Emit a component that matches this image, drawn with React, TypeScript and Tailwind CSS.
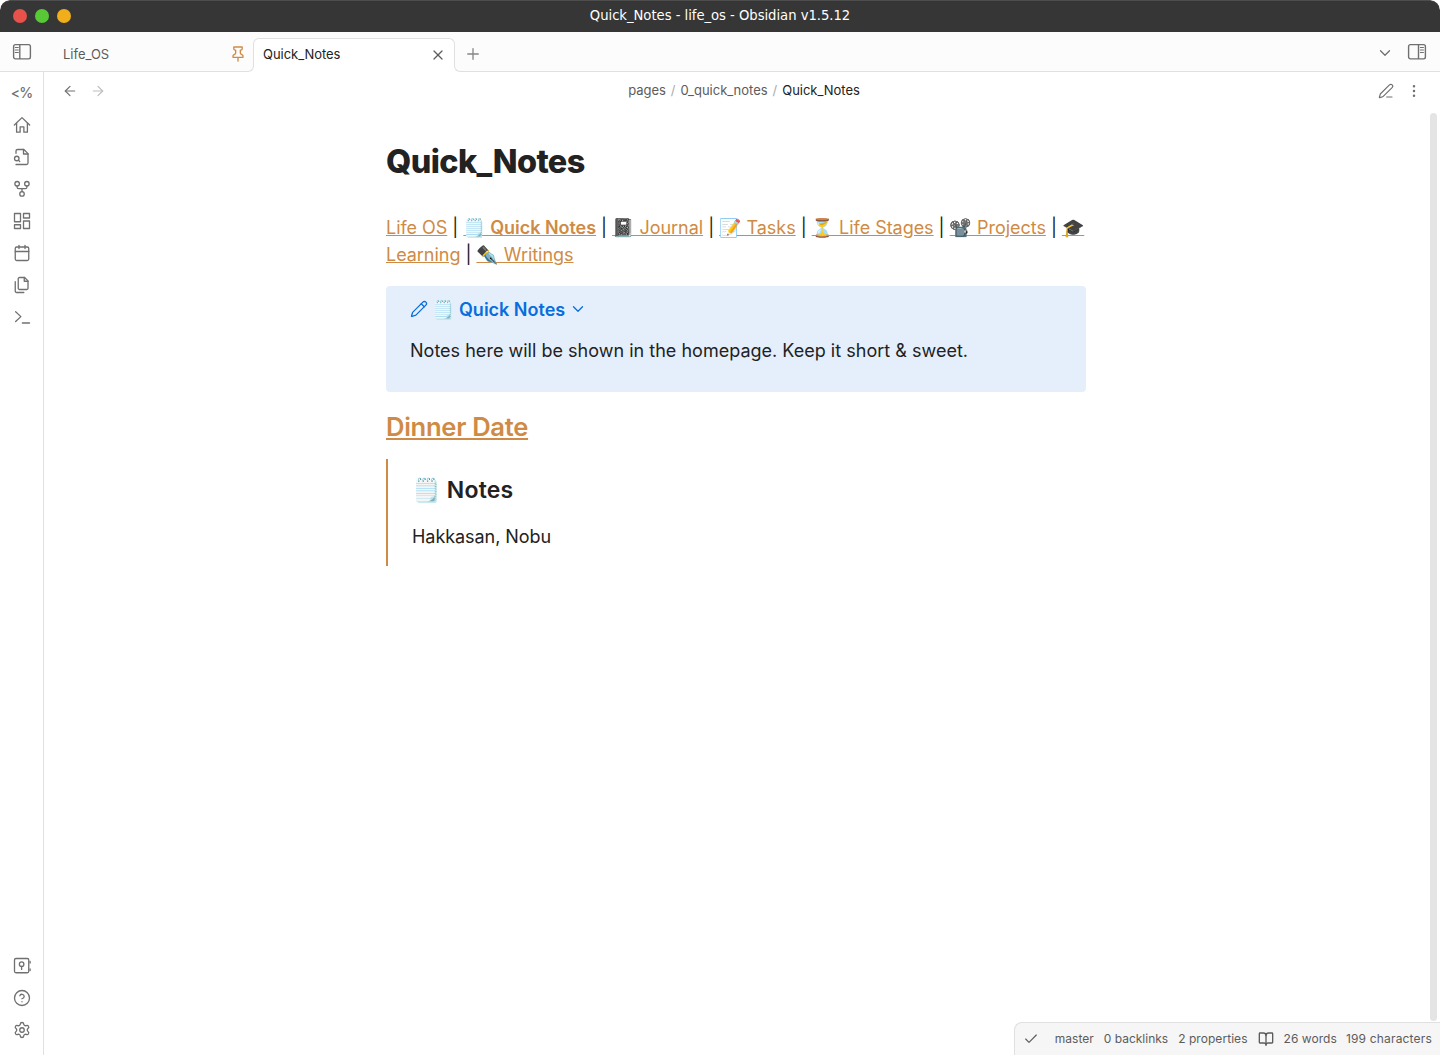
import { Fragment, type ReactNode } from "react";
import {
  ArrowLeft, ArrowRight, BookOpen, Calendar, Check, ChevronDown, CircleHelp, Edit3,
  MoreVertical, Pencil, Plus, Settings, X,
} from "lucide-react";

function Svg({ children, size = 18 }: { children: ReactNode; size?: number }) {
  return (
    <svg width={size} height={size} viewBox="0 0 24 24" fill="none" stroke="currentColor" strokeWidth="1.75" strokeLinecap="round" strokeLinejoin="round">
      {children}
    </svg>
  );
}

function SidebarIcon({ right = false }: { right?: boolean }) {
  return (
    <svg width="20" height="18" viewBox="0 0 20 18" fill="none" stroke="currentColor">
      <rect x="1.6" y="1.6" width="16.8" height="14.3" rx="1.8" strokeWidth="1.4" />
      <path d={right ? "M11.5 1.5v14.5" : "M7.8 1.5v14.5"} strokeWidth="1.4" />
      <path d={right ? "M13.4 4.5h3M13.4 7h3M13.4 9.5h3" : "M3.3 4.5h3M3.3 7h3M3.3 9.5h3"} strokeWidth="1.2" strokeLinecap="round" />
    </svg>
  );
}

const ribbonTop: ReactNode[] = [
  <span className="text-[14px] leading-none font-medium tracking-[-0.9px]">&lt;%</span>,
  <Svg><path d="M1.8 12 12 2.2 22.2 12" /><path d="M4.8 10v11.5h4.7v-7h5v7h4.7V10" /></Svg>,
  <Svg><path d="M4 22h14a2 2 0 0 0 2-2V7.5L14.5 2H6a2 2 0 0 0-2 2v3" /><path d="M14 2v6h6" /><circle cx="5" cy="14" r="3" /><path d="m9 18-1.5-1.5" /></Svg>,
  <Svg><circle cx="5.5" cy="5" r="3" /><circle cx="18.5" cy="5" r="3" /><circle cx="12" cy="18.5" r="3" /><path d="M5.5 8v1.5a2 2 0 0 0 2 2h9a2 2 0 0 0 2-2V8M12 11.5v4" /></Svg>,
  <Svg><path d="M2 2h8v11H2zM14 2h8v6h-8zM14 12h8v10h-8zM2 17h8v5H2z" /></Svg>,
  <Calendar size={18} strokeWidth={1.75} />,
  <Svg><path d="M15.5 2H8.6c-.4 0-.8.2-1.1.5-.3.3-.5.7-.5 1.1v12.8c0 .4.2.8.5 1.1.3.3.7.5 1.1.5h9.8c.4 0 .8-.2 1.1-.5.3-.3.5-.7.5-1.1V6.5L15.5 2z" /><path d="M3 7.6v12.8c0 .4.2.8.5 1.1.3.3.7.5 1.1.5h9.8M15 2v5h5" /></Svg>,
  <Svg><path d="m3.5 18 7-6.5-7-6.5M12.5 20H22" /></Svg>,
];

const links = [
  { text: "Life OS" },
  { text: "🗒️ Quick Notes", bold: true },
  { text: "📓 Journal" },
  { text: "📝 Tasks" },
  { text: "⏳ Life Stages" },
  { text: "📽️ Projects" },
  { text: "🎓 Learning" },
  { text: "✒️ Writings" },
];

export default function App() {
  return (
    <div className="bg-white">
      <div className="flex h-[1055px] w-[1440px] flex-col overflow-hidden rounded-t-[10px] bg-white font-['Inter','Noto_Color_Emoji',sans-serif] text-[#222222]">
        <header className="relative flex h-8 shrink-0 items-center justify-center rounded-t-[10px] border-t border-[#4d4d4d] bg-[#363636]">
          <div className="absolute top-2 left-[13px] flex gap-2">
            <i className="size-3.5 rounded-full bg-[#e9524a]" />
            <i className="size-3.5 rounded-full bg-[#59c837]" />
            <i className="size-3.5 rounded-full bg-[#f1ae1b]" />
          </div>
          <span className="pb-1 font-['DejaVu_Sans_Condensed','DejaVu_Sans',sans-serif] text-[14.67px] leading-5 tracking-[-0.03px] text-white [font-stretch:condensed]">Quick_Notes - life_os - Obsidian v1.5.12</span>
        </header>

        <div className="flex h-10 shrink-0 bg-[#fcfcfc] text-[13px] text-[#5c5c5c]">
          <div className="flex w-[53px] items-center border-b border-[#e0e0e0] pl-3 text-[#707070]"><SidebarIcon /></div>
          <div className="flex w-[200px] items-center justify-between border-b border-[#e0e0e0] pt-[5px] pr-[7px] pl-2.5">
            <span className="pt-0.5">Life_OS</span>
            <span className="text-[#cf8b45]">
              <svg width="16" height="16" viewBox="0 0 24 24" fill="none" stroke="currentColor" strokeWidth="2" strokeLinejoin="round" strokeLinecap="round">
                <path d="M12 17v5.5M4.5 17h15v-2a2 2 0 0 0-1.1-1.8l-1.8-.9A2 2 0 0 1 15.5 10.6V6.2h.8a2 2 0 0 0 2-2V1.5H5.7v2.7a2 2 0 0 0 2 2h.8v4.4a2 2 0 0 1-1.1 1.7l-1.8.9A2 2 0 0 0 4.5 15Z" />
              </svg>
            </span>
          </div>
          <div className="relative mt-1.5 flex w-[202px] items-center justify-between rounded-t-md border border-b-0 border-[#e0e0e0] bg-white pr-2 pb-[2px] pl-[9px] text-[#222222]">
            <span className="tracking-[-0.04px]">Quick_Notes</span>
            <X size={16} strokeWidth={1.9} className="text-[#5c5c5c]" />
            <i className="absolute bottom-0 -left-[6px] size-1.5 bg-white">
              <i className="block h-1.5 w-1.5 rounded-br-md border-r border-b border-[#e0e0e0] bg-[#fcfcfc]" />
            </i>
            <i className="absolute -right-[6px] bottom-0 size-1.5 bg-white">
              <i className="block h-1.5 w-1.5 rounded-bl-md border-b border-l border-[#e0e0e0] bg-[#fcfcfc]" />
            </i>
          </div>
          <div className="flex flex-1 items-center border-b border-[#e0e0e0] pt-1 pr-[13px] pl-[9px] text-[#707070]">
            <Plus size={18} strokeWidth={1.75} className="text-[#858585]" />
            <ChevronDown size={18} strokeWidth={1.75} className="-mt-0.5 mr-[13px] ml-auto" />
            <div className="-mt-1"><SidebarIcon right /></div>
          </div>
        </div>

        <div className="relative flex min-h-0 flex-1">
          <nav className="flex w-11 shrink-0 flex-col items-center border-r border-[#e0e0e0] pt-[5px] pb-[9px] text-[#707070]">
            {ribbonTop.map((icon, i) => (
              <div key={i} className="flex h-8 items-center">{icon}</div>
            ))}
            <div className="mt-auto flex h-8 items-center">
              <Svg><rect x="2" y="2" width="19" height="19" rx="2" /><circle cx="11.5" cy="9.5" r="3" /><path d="M11.5 12.5v4M22.8 6v2M22.8 16v2" /></Svg>
            </div>
            <div className="flex h-8 items-center"><CircleHelp size={18} strokeWidth={1.75} /></div>
            <div className="flex h-8 items-center"><Settings size={18} strokeWidth={1.75} /></div>
          </nav>

          <section className="flex min-w-0 flex-1 flex-col">
            <div className="flex h-[38px] shrink-0 items-center px-[18px] text-[13px] text-[#5c5c5c]">
              <div className="flex w-24 gap-3 text-[#707070]">
                <ArrowLeft size={16} strokeWidth={1.75} />
                <ArrowRight size={16} strokeWidth={1.75} className="text-[#bdbdbd]" />
              </div>
              <div className="flex flex-1 justify-center gap-[5px] pl-1 tracking-[-0.02px]">
                <span>pages</span><span className="text-[#ababab]">/</span>
                <span>0_quick_notes</span><span className="text-[#ababab]">/</span>
                <span className="text-[#222222]">Quick_Notes</span>
              </div>
              <div className="flex w-24 justify-end gap-3 text-[#707070]">
                <Edit3 size={16} strokeWidth={1.75} />
                <MoreVertical size={16} strokeWidth={1.75} />
              </div>
            </div>

            <div className="flex min-h-0 flex-1">
              <main className="ml-[342px] w-[700px] text-[18px] leading-[27px]">
                <h1 className="mt-8 text-[32.4px] leading-10 font-extrabold tracking-[-0.6px]">Quick_Notes</h1>
                <p className="mt-8 w-[704px] tracking-[-0.035px]">
                  {links.map((l, i) => (
                    <Fragment key={l.text}>
                      {i > 0 && " | "}
                      <a className={l.bold ? "font-semibold text-[#cf8b45] underline" : "text-[#cf8b45] underline"}>{l.text}</a>
                    </Fragment>
                  ))}
                </p>
                <div className="mt-[18px] h-[106px] rounded bg-[#e5effb] px-6 pt-[11px]">
                  <div className="flex h-[25px] items-center font-semibold text-[#086ddd]">
                    <Pencil size={18} strokeWidth={1.75} className="mr-1 -mt-0.5" />
                    <span>🗒️ Quick Notes</span>
                    <ChevronDown size={18} strokeWidth={1.75} className="-mt-0.5 ml-1" />
                  </div>
                  <p className="mt-[15px] tracking-[0.015px]">Notes here will be shown in the homepage. Keep it short &amp; sweet.</p>
                </div>
                <h2 className="mt-[19px] text-[25.6px] leading-8 font-semibold tracking-[-0.3px] text-[#cf8b45] underline">Dinner Date</h2>
                <div className="mt-4 h-[107px] border-l-2 border-[#cf8b45] pl-6">
                  <h3 className="pt-4 text-[23px] leading-[31px] font-semibold tracking-[0.2px]">🗒️ Notes</h3>
                  <p className="mt-[17px] tracking-[-0.05px]">Hakkasan, Nobu</p>
                </div>
              </main>
              <div className="mt-[3px] mr-[3px] mb-[34px] ml-auto w-[7px] rounded-full bg-[#e4e4e4]" />
            </div>
          </section>

          <footer className="absolute right-0 bottom-0 flex h-[33px] w-[426px] items-center rounded-tl-lg border-t border-l border-[#e0e0e0] bg-[#f6f6f6] pr-2 pl-2 text-[12px] whitespace-nowrap text-[#5c5c5c]">
            <Check size={16} strokeWidth={1.75} />
            <div className="ml-auto flex items-center gap-[10px]">
              <span>master</span>
              <span>0 backlinks</span>
              <span className="tracking-[0.05px]">2 properties</span>
              <BookOpen size={16} strokeWidth={2} />
              <span className="tracking-[0.05px]">26 words</span>
              <span className="-ml-px tracking-[0.18px]">199 characters</span>
            </div>
          </footer>
        </div>
      </div>
    </div>
  );
}
